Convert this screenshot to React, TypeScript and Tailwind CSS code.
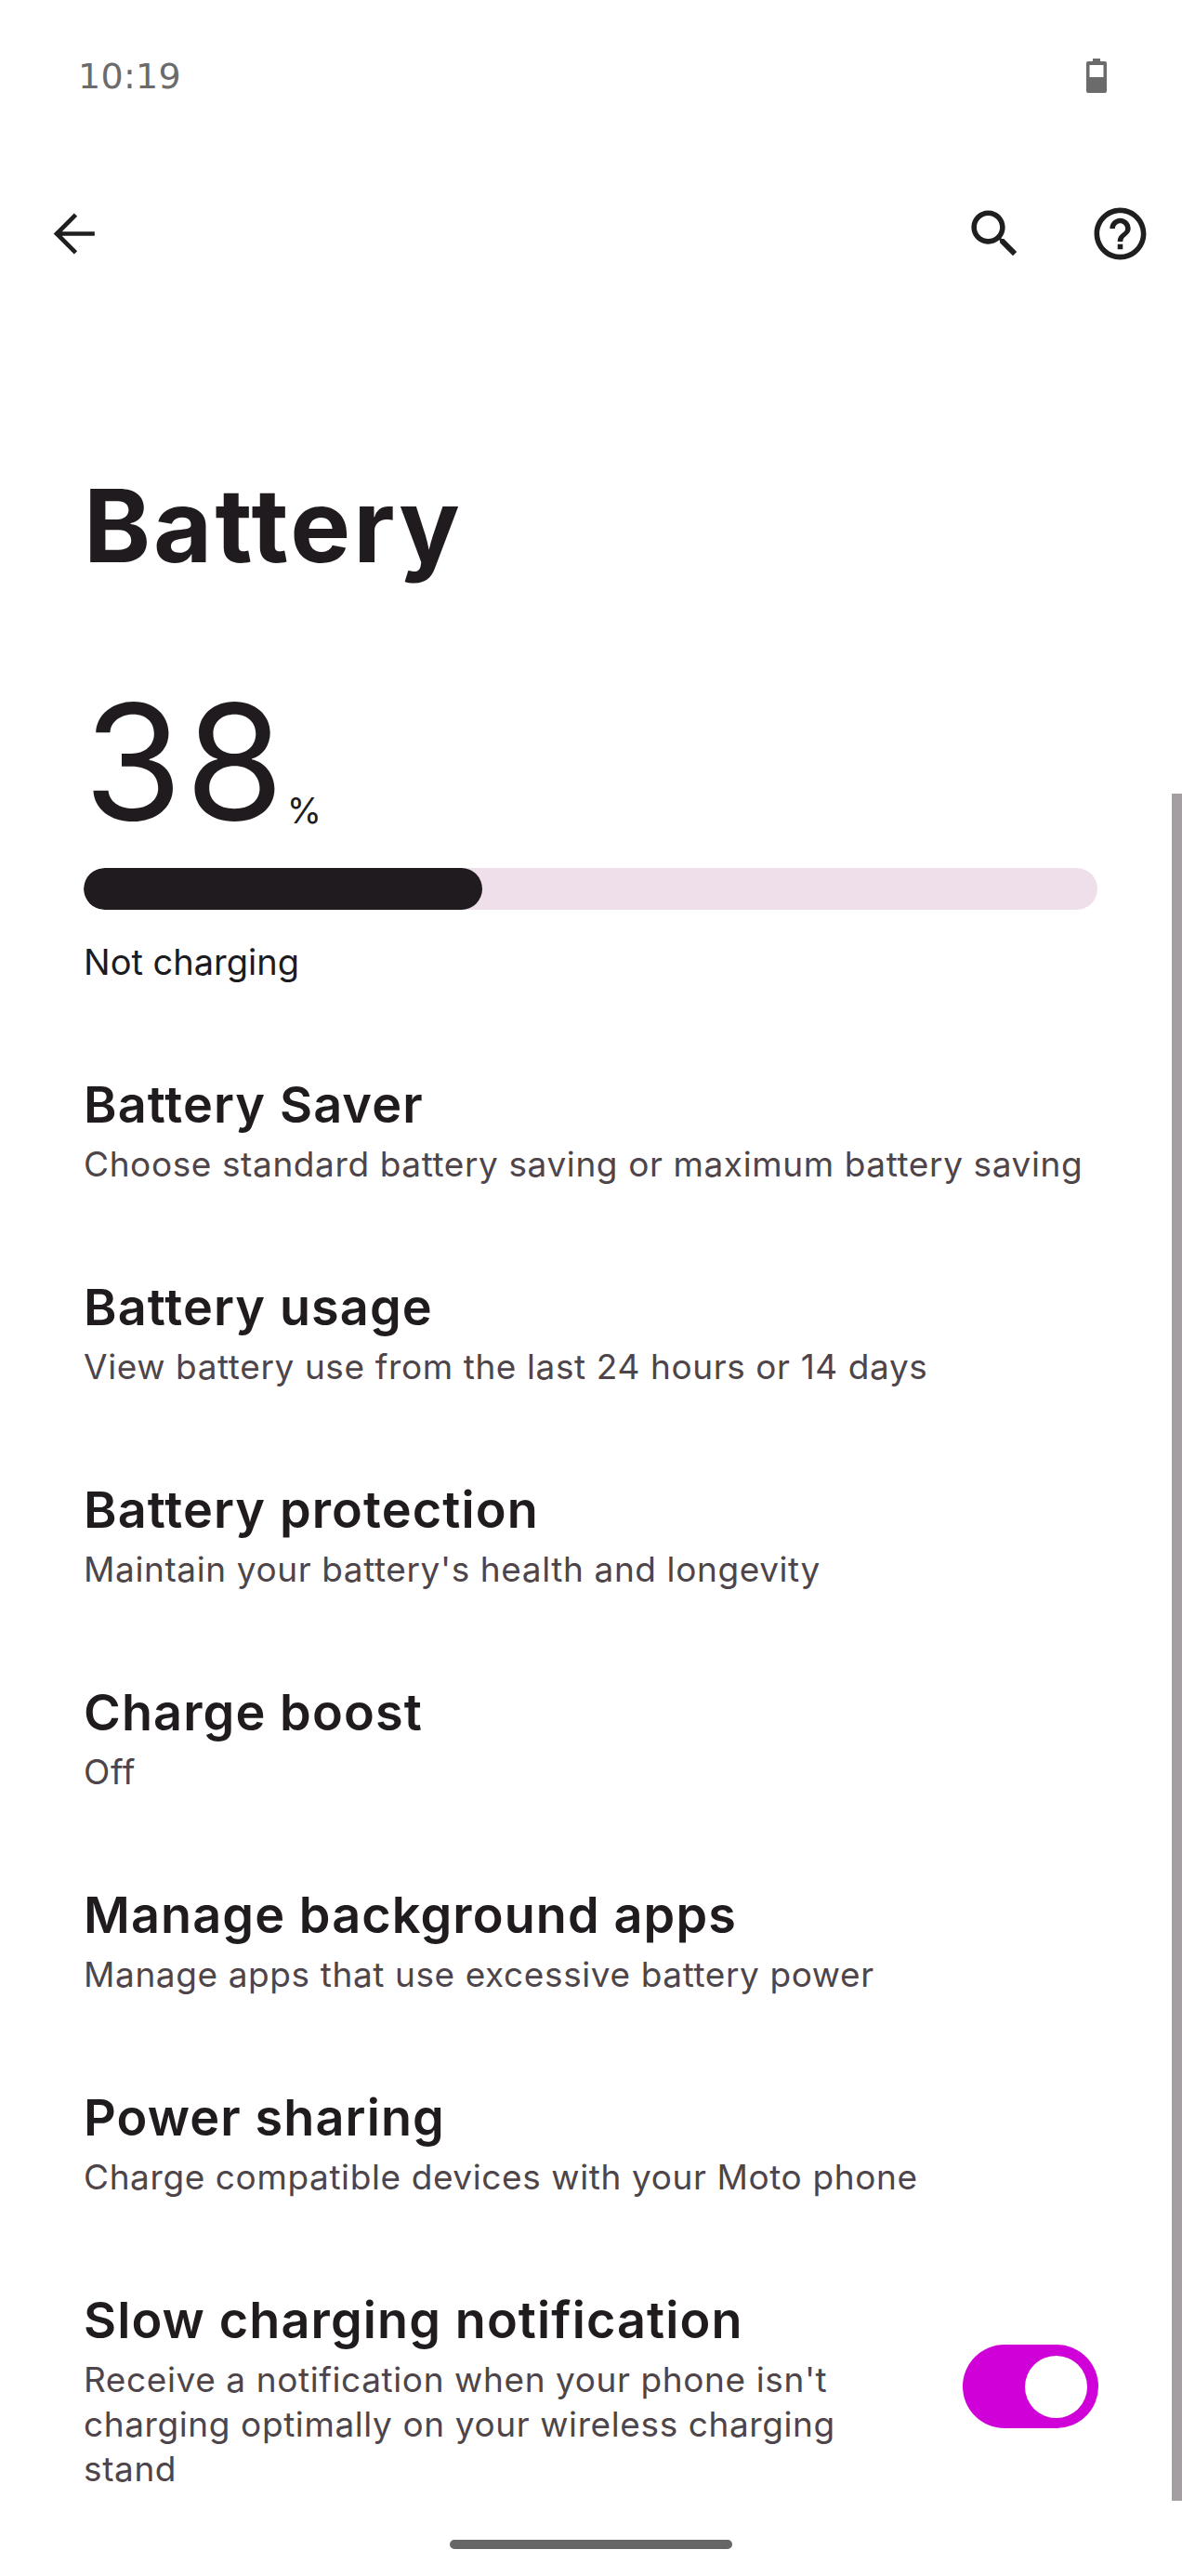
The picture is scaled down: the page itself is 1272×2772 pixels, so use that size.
const SEARCH =
  "M15.5 14h-.79l-.28-.27C15.41 12.59 16 11.11 16 9.5 16 5.91 13.09 3 9.5 3S3 5.91 3 9.5 5.91 16 9.5 16c1.61 0 3.09-.59 4.23-1.57l.27.28v.79l5 4.99L20.49 19l-4.99-5zm-6 0C7.01 14 5 11.99 5 9.5S7.01 5 9.5 5 14 7.01 14 9.5 11.99 14 9.5 14z";
const HELP =
  "M11 18h2v-2h-2v2zm1-16C6.48 2 2 6.48 2 12s4.48 10 10 10 10-4.48 10-10S17.52 2 12 2zm0 18c-4.41 0-8-3.59-8-8s3.59-8 8-8 8 3.59 8 8-3.59 8-8 8zm0-14c-2.21 0-4 1.79-4 4h2c0-1.1.9-2 2-2s2 .9 2 2c0 2-3 1.75-3 5h2c0-2.25 3-2.5 3-5 0-2.21-1.79-4-4-4z";

const ROWS = [
  { title: "Battery Saver", sub: "Choose standard battery saving or maximum battery saving" },
  { title: "Battery usage", sub: "View battery use from the last 24 hours or 14 days" },
  { title: "Battery protection", sub: "Maintain your battery's health and longevity" },
  { title: "Charge boost", sub: "Off" },
  { title: "Manage background apps", sub: "Manage apps that use excessive battery power" },
  { title: "Power sharing", sub: "Charge compatible devices with your Moto phone" },
];

function Icon({ d }: { d: string }) {
  return (
    <svg viewBox="0 0 24 24" className="h-[67px] w-[67px] fill-[#1f1f1f]">
      <path d={d} />
    </svg>
  );
}

function Row({ title, sub }: { title: string; sub: string }) {
  return (
    <div className="h-[218px] pl-[90px] pt-[38px]">
      <div className="h-[72px] text-[54px] leading-[63px] font-semibold tracking-[1.1px] text-[#201b1e]">{title}</div>
      <div className="h-[48px] text-[37px] leading-[48px] tracking-[0.6px] text-[#4d4549]">{sub}</div>
    </div>
  );
}

export default function App() {
  return (
    <div className="relative h-[2772px] w-[1272px] overflow-hidden bg-white font-['Inter',sans-serif]">
      {/* Status bar */}
      <div className="flex h-[191px] items-start justify-between pl-[84px] pr-[81px] pt-[58px]">
        <span className="font-['DejaVu_Sans',sans-serif] text-[38px] leading-[48px] tracking-[0.3px] text-[#6b6b6b]">10:19</span>
        <svg viewBox="0 0 22 37" className="mt-[5px] h-[37px] w-[22px]">
          <path d="M7 0h8v3h5a2 2 0 0 1 2 2v30a2 2 0 0 1-2 2H2a2 2 0 0 1-2-2V5a2 2 0 0 1 2-2h5z" fill="#6b6b6b" />
          <rect x="3.5" y="7" width="15" height="13" fill="#fff" />
        </svg>
      </div>

      {/* App bar */}
      <div className="flex h-[120px] items-center justify-between pl-[46px] pr-[33px]">
        <svg viewBox="0 0 24 24" className="h-[67px] w-[67px] fill-none stroke-[#1f1f1f] stroke-[1.7]">
          <path d="M12.7 4.7 5.4 12l7.3 7.3M20 12H5.4" />
        </svg>
        <div className="flex items-center gap-[68px]">
          <Icon d={SEARCH} />
          <Icon d={HELP} />
        </div>
      </div>

      <h1 className="mt-[189px] pl-[90px] text-[109px] leading-[130px] font-bold tracking-[3px] text-[#201b1e]">Battery</h1>

      {/* Level */}
      <div className="mt-[89px] pl-[90px]">
        <div className="flex h-[200px] items-end">
          <span className="text-[172px] leading-[200px] font-normal tracking-[3px] text-[#201b1e]">38</span>
          <span className="mb-[23px] text-[38px] leading-[48px] text-[#201b1e]">%</span>
        </div>
        <div className="mt-[15px] h-[45px] w-[1091px] overflow-hidden rounded-full bg-[#eedfea]">
          <div className="h-full w-[429px] rounded-full bg-[#201b1e]" />
        </div>
        <div className="mt-[32px] text-[38px] leading-[48px] text-[#1c1b1f]">Not charging</div>
      </div>

      {/* Settings */}
      <div className="mt-[60px]">
        {ROWS.map((r) => (
          <Row key={r.title} title={r.title} sub={r.sub} />
        ))}
        <div className="flex pl-[90px] pr-[90px] pt-[38px]">
          <div className="w-[880px]">
            <div className="h-[72px] text-[54px] leading-[63px] font-semibold tracking-[1.1px] text-[#201b1e]">
              Slow charging notification
            </div>
            <div className="text-[37px] leading-[48px] tracking-[0.6px] text-[#4d4549]">
              Receive a notification when your phone isn't charging optimally on your wireless charging stand
            </div>
          </div>
          <div className="ml-auto mt-[58px] flex h-[90px] w-[146px] shrink-0 items-center justify-end rounded-full bg-[#d000d8] pr-[12px]">
            <div className="h-[67px] w-[67px] rounded-full bg-white" />
          </div>
        </div>
      </div>

      {/* Overlays */}
      <div className="absolute right-0 top-[854px] h-[1837px] w-[11px] bg-[#a49ea2]" />
      <div className="absolute bottom-[29px] left-[484px] h-[10px] w-[304px] rounded-full bg-[#666666]" />
    </div>
  );
}
